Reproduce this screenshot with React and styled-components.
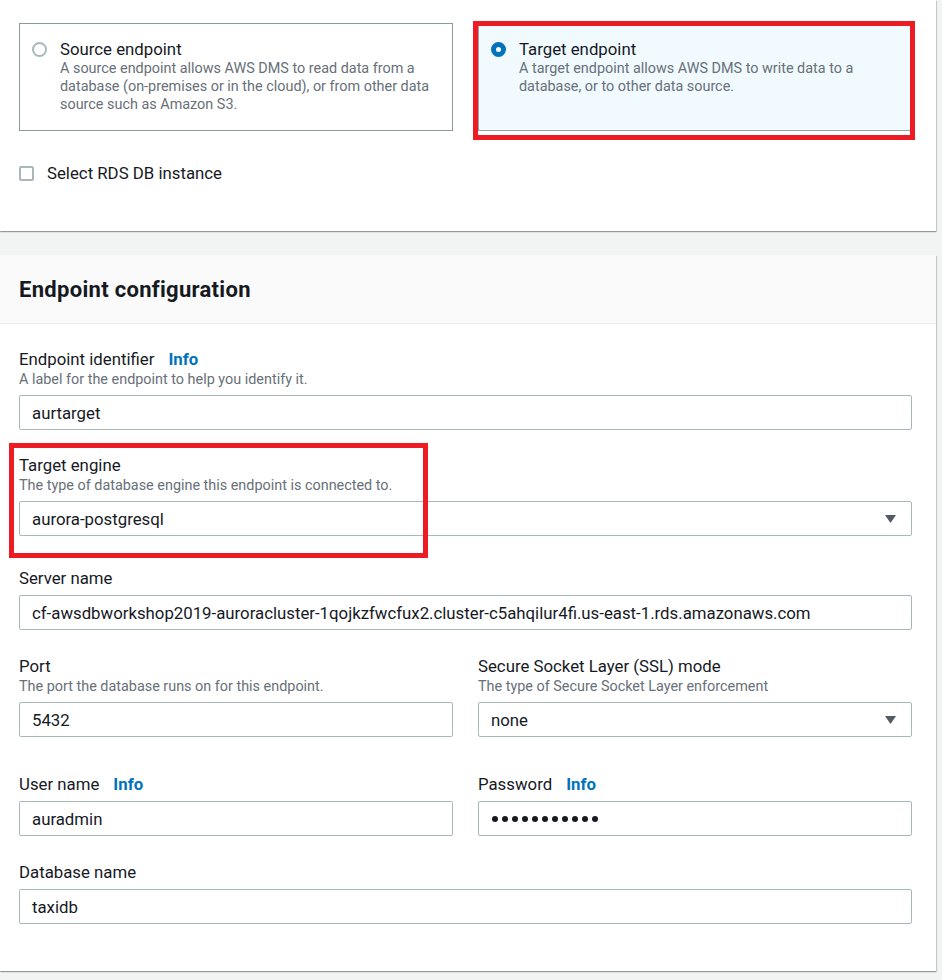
import React from 'react';
import styled, { createGlobalStyle } from 'styled-components';

const GlobalStyle = createGlobalStyle`
  body {
    margin: 0;
    background: #f2f3f3;
    font-family: Roboto, "Liberation Sans", Arial, sans-serif;
    color: #16191f;
  }
`;

const Page = styled.div`
  width: 936px;
  padding-bottom: 8px;
`;

const Panel = styled.section`
  background: #fff;
  box-shadow: 0 1px 1px 0 rgba(0, 28, 36, 0.3), 1px 1px 1px 0 rgba(0, 28, 36, 0.15);
  & + & {
    margin-top: 24px;
  }
`;

const TypePanel = styled(Panel)`
  padding: 23px 24px 47px 19px;
`;

const Tiles = styled.div`
  display: grid;
  grid-template-columns: 434px 434px;
  column-gap: 25px;
`;

const TileWrap = styled.div`
  position: relative;
  display: flex;
`;

const Tile = styled.label`
  flex: 1;
  display: flex;
  align-items: flex-start;
  gap: 13px;
  padding: 14px 20px 16px 12px;
  border: 1px solid ${p => (p.$selected ? '#99a3a4' : '#8d9899')};
  background: ${p => (p.$selected ? '#f1faff' : '#fff')};
`;

const Radio = styled.span`
  flex: none;
  box-sizing: border-box;
  width: 15px;
  height: 15px;
  margin-top: 4px;
  border-radius: 50%;
  background: #fff;
  border: ${p => (p.$checked ? '5px solid #0073bb' : '2px solid #aab7b8')};
`;

const TileText = styled.div`
  display: flex;
  flex-direction: column;
`;

const TileTitle = styled.span`
  font-size: 16.8px;
  line-height: 22px;
`;

const TileDesc = styled.span`
  font-size: 14.4px;
  line-height: 18px;
  color: #687078;
`;

const Highlight = styled.div`
  position: absolute;
  box-sizing: border-box;
  inset: ${p => p.$inset};
  width: ${p => p.$width || 'auto'};
  border: 5px solid #ed1c24;
  pointer-events: none;
`;

const CheckRow = styled.label`
  display: flex;
  align-items: center;
  gap: 13px;
  margin-top: 31px;
  font-size: 16.8px;
  line-height: 22px;
`;

const Checkbox = styled.span`
  box-sizing: border-box;
  width: 15px;
  height: 15px;
  border: 2px solid #aab7b8;
  border-radius: 2px;
  background: #fff;
`;

const Header = styled.div`
  padding: 21px 24px 19px 19px;
  background: #fafafa;
  border-bottom: 1px solid #eaeded;
`;

const Title = styled.h2`
  margin: 0;
  font-size: 22px;
  line-height: 28px;
  letter-spacing: 0.3px;
  font-weight: 700;
`;

const Body = styled.div`
  padding: 24px 24px 47px 19px;
`;

const Columns = styled.div`
  display: grid;
  grid-template-columns: 434px 434px;
  column-gap: 25px;
  margin-top: ${p => p.$top || 0}px;
`;

const Field = styled.div`
  position: relative;
  display: flex;
  flex-direction: column;
  margin-top: ${p => p.$top || 0}px;
`;

const Label = styled.div`
  font-size: 16.8px;
  line-height: 22px;
`;

const Info = styled.a`
  margin-left: 14px;
  font-weight: 700;
  color: #0073bb;
  text-decoration: none;
`;

const Desc = styled.div`
  font-size: 14.4px;
  line-height: 19px;
  color: #687078;
`;

const Control = styled.div`
  box-sizing: border-box;
  display: flex;
  align-items: center;
  height: 35px;
  margin-top: 6px;
  padding: 0 15px 0 12px;
  border: 1px solid #aab7b8;
  border-radius: 2px;
  background: #fff;
  font-size: 16.8px;
  white-space: nowrap;
`;

const Caret = styled.svg`
  margin-left: auto;
  flex: none;
`;

const Dots = styled.div`
  display: flex;
  gap: 4px;
  margin-left: 1px;
`;

const Dot = styled.span`
  width: 6px;
  height: 6px;
  border-radius: 50%;
  background: #16191f;
`;

const Select = ({ value }) => (
  <Control>
    {value}
    <Caret width="11" height="8" viewBox="0 0 11 8">
      <polygon points="0,0 11,0 5.5,8" fill="#545b64" />
    </Caret>
  </Control>
);

const FieldBlock = ({ label, info, desc, top, children, highlight }) => (
  <Field $top={top}>
    <Label>
      {label}
      {info && <Info href="#">Info</Info>}
    </Label>
    {desc && <Desc>{desc}</Desc>}
    {children}
    {highlight}
  </Field>
);

export default function App() {
  return (
    <Page>
      <GlobalStyle />
      <TypePanel>
        <Tiles>
          <TileWrap>
            <Tile>
              <Radio />
              <TileText>
                <TileTitle>Source endpoint</TileTitle>
                <TileDesc>
                  A source endpoint allows AWS DMS to read data from a database (on-premises or in the
                  cloud), or from other data source such as Amazon S3.
                </TileDesc>
              </TileText>
            </Tile>
          </TileWrap>
          <TileWrap>
            <Tile $selected>
              <Radio $checked />
              <TileText>
                <TileTitle>Target endpoint</TileTitle>
                <TileDesc>
                  A target endpoint allows AWS DMS to write data to a database, or to other data source.
                </TileDesc>
              </TileText>
            </Tile>
            <Highlight $inset="-2px -3px -9px -5px" />
          </TileWrap>
        </Tiles>
        <CheckRow>
          <Checkbox />
          Select RDS DB instance
        </CheckRow>
      </TypePanel>

      <Panel>
        <Header>
          <Title>Endpoint configuration</Title>
        </Header>
        <Body>
          <FieldBlock label="Endpoint identifier" info desc="A label for the endpoint to help you identify it.">
            <Control>aurtarget</Control>
          </FieldBlock>
          <FieldBlock
            label="Target engine"
            desc="The type of database engine this endpoint is connected to."
            top={24}
            highlight={<Highlight $inset="-11px auto -22px -10px" $width="419px" />}
          >
            <Select value="aurora-postgresql" />
          </FieldBlock>
          <FieldBlock label="Server name" top={31}>
            <Control>
              cf-awsdbworkshop2019-auroracluster-1qojkzfwcfux2.cluster-c5ahqilur4fi.us-east-1.rds.amazonaws.com
            </Control>
          </FieldBlock>
          <Columns $top={25}>
            <FieldBlock label="Port" desc="The port the database runs on for this endpoint.">
              <Control>5432</Control>
            </FieldBlock>
            <FieldBlock label="Secure Socket Layer (SSL) mode" desc="The type of Secure Socket Layer enforcement">
              <Select value="none" />
            </FieldBlock>
          </Columns>
          <Columns $top={36}>
            <FieldBlock label="User name" info>
              <Control>auradmin</Control>
            </FieldBlock>
            <FieldBlock label="Password" info>
              <Control>
                <Dots>
                  {Array.from({ length: 11 }, (_, i) => (
                    <Dot key={i} />
                  ))}
                </Dots>
              </Control>
            </FieldBlock>
          </Columns>
          <FieldBlock label="Database name" top={25}>
            <Control>taxidb</Control>
          </FieldBlock>
        </Body>
      </Panel>
    </Page>
  );
}
